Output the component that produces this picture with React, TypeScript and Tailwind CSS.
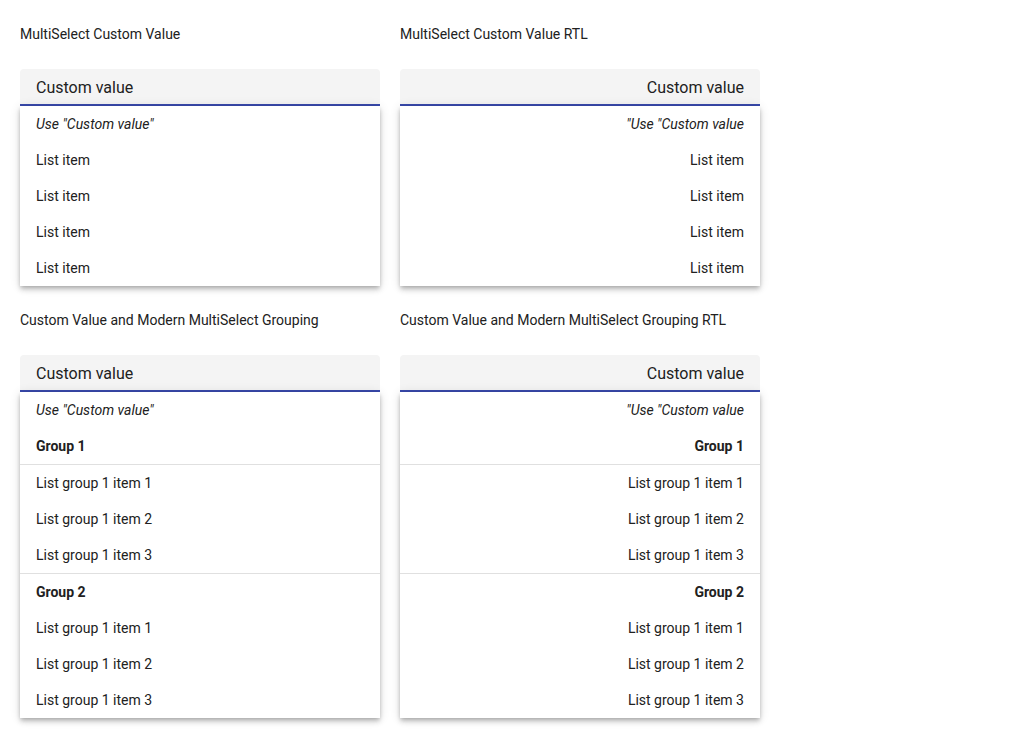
type Row = { kind: 'custom' | 'item' | 'group'; text: string; divider?: boolean };

const simpleRows: Row[] = [
  { kind: 'custom', text: 'Use "Custom value"' },
  { kind: 'item', text: 'List item' },
  { kind: 'item', text: 'List item' },
  { kind: 'item', text: 'List item' },
  { kind: 'item', text: 'List item' },
];

const groupedRows: Row[] = [
  { kind: 'custom', text: 'Use "Custom value"' },
  { kind: 'group', text: 'Group 1' },
  { kind: 'item', text: 'List group 1 item 1', divider: true },
  { kind: 'item', text: 'List group 1 item 2' },
  { kind: 'item', text: 'List group 1 item 3' },
  { kind: 'group', text: 'Group 2', divider: true },
  { kind: 'item', text: 'List group 1 item 1' },
  { kind: 'item', text: 'List group 1 item 2' },
  { kind: 'item', text: 'List group 1 item 3' },
];

function Demo({ title, rows, rtl }: { title: string; rows: Row[]; rtl?: boolean }) {
  return (
    <div className="w-[360px]">
      <div className="mt-6 h-5 text-sm leading-5 text-[#212121]">{title}</div>
      <div dir={rtl ? 'rtl' : 'ltr'} className="mt-[25px]">
        <div className="h-[37px] px-4 flex items-center bg-[#f4f4f4] rounded-t-[4px] border-b-2 border-[#3949ab] text-base text-[#212121] pt-[2px]">
          Custom value
        </div>
        <div className="bg-white shadow-[0_2px_4px_-1px_rgba(0,0,0,0.2),0_4px_5px_0_rgba(0,0,0,0.14),0_1px_10px_0_rgba(0,0,0,0.12)]">
          {rows.map((r, i) => (
            <div
              key={i}
              className={
                'h-9 px-4 flex items-center text-sm text-[#212121] ' +
                (r.divider ? 'border-t border-[#e0e0e0] h-[37px] ' : '') +
                (r.kind === 'custom' ? 'italic ' : '') +
                (r.kind === 'group' ? 'font-bold ' : '')
              }
            >
              {r.text}
            </div>
          ))}
        </div>
      </div>
    </div>
  );
}

export default function App() {
  return (
    <div className="min-h-screen bg-white px-5 font-['Roboto',sans-serif]">
      <div className="flex gap-5">
        <Demo title="MultiSelect Custom Value" rows={simpleRows} />
        <Demo title="MultiSelect Custom Value RTL" rows={simpleRows} rtl />
      </div>
      <div className="flex gap-5">
        <Demo title="Custom Value and Modern MultiSelect Grouping" rows={groupedRows} />
        <Demo title="Custom Value and Modern MultiSelect Grouping RTL" rows={groupedRows} rtl />
      </div>
    </div>
  );
}
